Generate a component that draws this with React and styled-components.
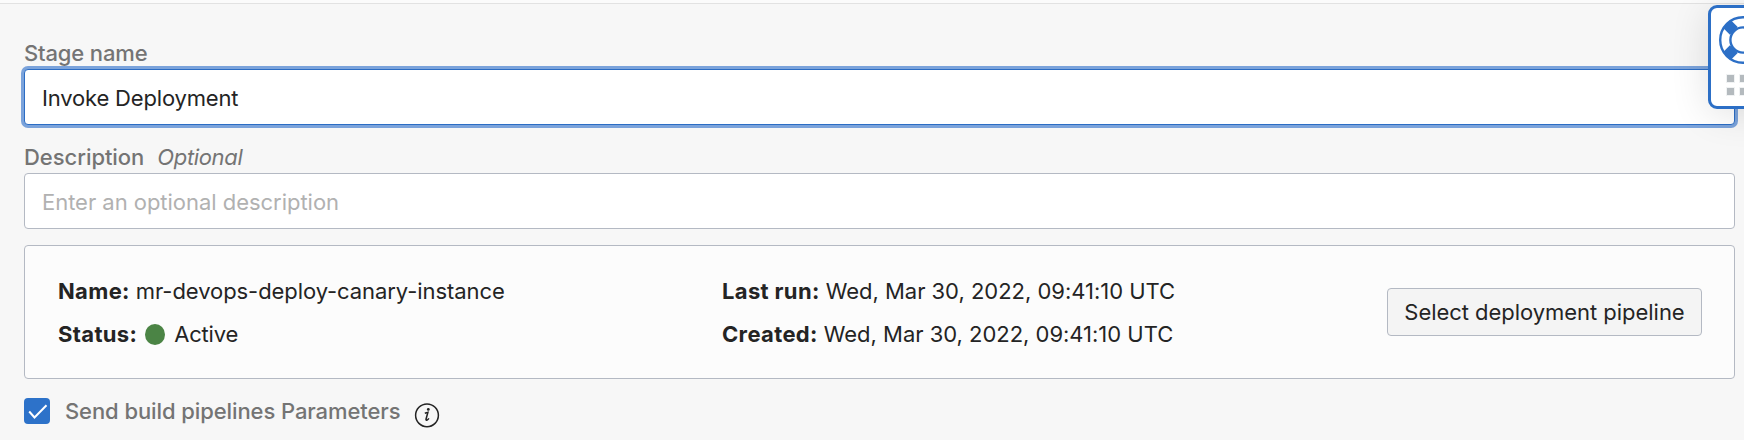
import React from "react";
import styled, { createGlobalStyle } from "styled-components";

const GlobalStyle = createGlobalStyle`
  * { box-sizing: border-box; }
  body {
    margin: 0;
    background: #f7f7f7;
    color: #242424;
    font-family: Inter, "Liberation Sans", sans-serif;
    font-size: 22px;
    line-height: 28px;
    overflow: hidden;
  }
`;

const Page = styled.main`
  position: relative;
  height: 440px;
  overflow: hidden;
  background: #f7f7f7;
`;

const TopEdge = styled.div`
  height: 4px;
  background: #fbfbfb;
  border-bottom: 1px solid #e2e2e2;
`;

const Form = styled.form`
  display: flex;
  flex-direction: column;
  width: 1735px;
  padding: 35px 0 0 24px;
`;

const Field = styled.div`
  display: flex;
  flex-direction: column;
  gap: 2px;
  margin-bottom: ${({ $gap }) => $gap}px;
`;

const Label = styled.label`
  color: #747474;
  font-weight: 500;
  white-space: pre;
  letter-spacing: ${({ $track = 0 }) => $track}px;
`;

const Hint = styled.em`
  margin-left: 13px;
  font-weight: 400;
  letter-spacing: -0.35px;
`;

const Input = styled.input`
  width: 100%;
  height: 56px;
  padding: 2px 16px 0 17px;
  border: 1px solid ${({ $focused }) => ($focused ? "#2c6dc4" : "#b4b9c3")};
  border-radius: 4px;
  outline: none;
  background: #fff;
  box-shadow: ${({ $focused }) => ($focused ? "0 0 0 3px #7ba3db" : "none")};
  color: #242424;
  font: inherit;
  letter-spacing: ${({ $track = 0 }) => $track}px;
  &::placeholder { color: #b1b1b1; opacity: 1; }
`;

const Card = styled.section`
  display: grid;
  grid-template-columns: 664px 1fr auto;
  align-items: center;
  height: 134px;
  padding: 0 32px 0 33px;
  border: 1px solid #b4b9c3;
  border-radius: 4px;
  background: #fcfcfc;
`;

const Details = styled.dl`
  margin: 0;
  padding-top: 2px;
`;

const DetailRow = styled.div`
  display: flex;
  align-items: center;
  height: 43px;
  line-height: 43px;
  white-space: nowrap;
`;

const Term = styled.dt`
  font-weight: 700;
  letter-spacing: 0.35px;
  margin-right: ${({ $gap = 7 }) => $gap}px;
`;

const Value = styled.dd`
  display: flex;
  align-items: center;
  gap: 9px;
  margin: 0;
  letter-spacing: ${({ $track = 0 }) => $track}px;
`;

const StatusDot = styled.span`
  width: 20px;
  height: 21px;
  border-radius: 50%;
  background: #4b8445;
`;

const Button = styled.button`
  width: 315px;
  height: 48px;
  padding: 0;
  border: 1px solid #b4b9c3;
  border-radius: 4px;
  background: #f4f4f4;
  color: #242424;
  font: inherit;
  letter-spacing: -0.04px;
`;

const CheckRow = styled.div`
  display: flex;
  align-items: flex-start;
  margin-top: 19px;
`;

const Checkbox = styled.span`
  display: block;
  width: 26px;
  height: 26px;
  margin-right: 15px;
  border-radius: 4px;
  background: #2d72c9;
  svg { display: block; }
`;

const CheckLabel = styled(Label)`
  line-height: 26px;
`;

const InfoIcon = styled.svg`
  margin: 4px 0 0 14px;
`;

const HelpWidget = styled.aside`
  position: absolute;
  top: 5px;
  right: -34px;
  width: 70px;
  height: 104px;
  padding: 8px 0 0 8px;
  border: 3px solid #2c6fc6;
  border-radius: 9px;
  background: #fff;
  box-shadow: 0 4px 38px rgba(0, 0, 0, 0.12);
  svg { display: block; }
`;

const Grip = styled.div`
  display: grid;
  grid-template-columns: repeat(3, 7px);
  gap: 6px;
  margin: 11px 0 0 8px;
`;

const GripDot = styled.span`
  height: 7px;
  background: #b4babe;
  box-shadow: 0 0 0 1px #f0f2f3;
`;

function Detail({ term, gap, track, children }) {
  return (
    <DetailRow>
      <Term $gap={gap}>{term}</Term>
      <Value $track={track}>{children}</Value>
    </DetailRow>
  );
}

function Lifebuoy() {
  return (
    <svg width="48" height="48" viewBox="-24 -24 48 48" fill="none">
      <g stroke="#2c6fc6" strokeWidth="11" transform="rotate(45)">
        <path d="M-22.5 0H-13M13 0H22.5M0-22.5V-13M0 13V22.5" />
      </g>
      <circle r="22.8" stroke="#2c6fc6" strokeWidth="2.4" />
      <circle r="12.6" stroke="#2c6fc6" strokeWidth="2.4" />
    </svg>
  );
}

export default function App() {
  return (
    <Page>
      <GlobalStyle />
      <TopEdge />
      <Form>
        <Field $gap={18}>
          <Label htmlFor="stage" $track={-0.15}>Stage name</Label>
          <Input id="stage" $focused $track={-0.17} defaultValue="Invoke Deployment" />
        </Field>
        <Field $gap={16}>
          <Label htmlFor="description" $track={-0.05}>
            Description<Hint>Optional</Hint>
          </Label>
          <Input id="description" $track={-0.03} placeholder="Enter an optional description" />
        </Field>
        <Card>
          <Details>
            <Detail term="Name:" gap={6} track={-0.07}>mr-devops-deploy-canary-instance</Detail>
            <Detail term="Status:" gap={8} track={-0.2}><StatusDot />Active</Detail>
          </Details>
          <Details>
            <Detail term="Last run:" gap={6} track={-0.02}>Wed, Mar 30, 2022, 09:41:10 UTC</Detail>
            <Detail term="Created:" gap={6} track={-0.02}>Wed, Mar 30, 2022, 09:41:10 UTC</Detail>
          </Details>
          <Button type="button">Select deployment pipeline</Button>
        </Card>
        <CheckRow>
          <Checkbox role="checkbox" aria-checked="true">
            <svg width="26" height="26" viewBox="0 0 26 26" fill="none" stroke="#fff" strokeWidth="2">
              <path d="M5.2 13.5L10.5 19.5L22.5 7.3" />
            </svg>
          </Checkbox>
          <CheckLabel $track={-0.09}>Send build pipelines Parameters</CheckLabel>
          <InfoIcon width="26" height="26" viewBox="0 0 26 26" fill="none" stroke="#242424">
            <circle cx="13" cy="13.3" r="11.4" strokeWidth="1.5" />
            <path d="M10.8 11.3L13.9 10.3L12 17.2Q11.8 18.5 12.8 18.2Q14 17.7 14.9 16.3" strokeWidth="1.5" />
            <circle cx="14.3" cy="7.4" r="1.4" fill="#242424" stroke="none" />
          </InfoIcon>
        </CheckRow>
      </Form>
      <HelpWidget>
        <Lifebuoy />
        <Grip>
          {Array.from({ length: 6 }, (_, i) => <GripDot key={i} />)}
        </Grip>
      </HelpWidget>
    </Page>
  );
}
